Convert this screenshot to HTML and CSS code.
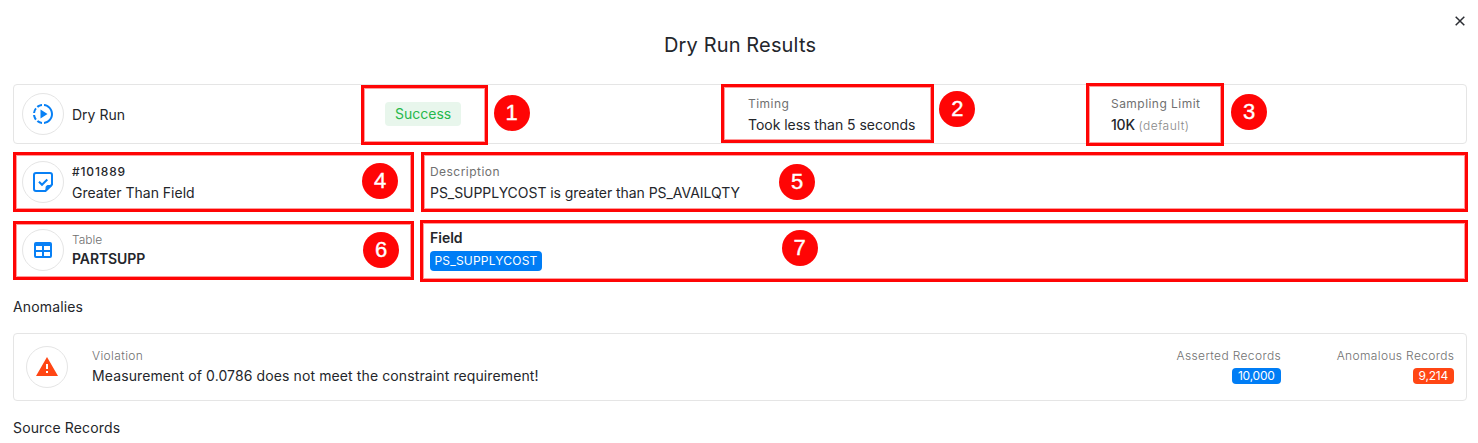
FILE: index.html
```html
<!DOCTYPE html>
<html lang="en">
<head>
<meta charset="utf-8">
<title>Dry Run Results</title>
<link rel="stylesheet" href="styles.css">
</head>
<body>
<main class="dialog">
  <header class="header">
    <h1 class="title">Dry Run Results</h1>
    <button class="close" aria-label="Close"><svg width="10" height="10" viewBox="0 0 10 10"><path d="M.7.7l8.6 8.6M9.3.7L.7 9.3" stroke="#2b2d33" stroke-width="1.5"/></svg></button>
  </header>

  <section class="card run">
    <div class="icon"><svg width="24" height="24" viewBox="0 0 24 24" fill="#0880f5"><path d="M13 2.05v2.02c3.95.49 7 3.85 7 7.93s-3.05 7.44-7 7.93v2.02c5.05-.5 9-4.76 9-9.95s-3.95-9.45-9-9.95M11 2.06c-1.95.19-3.81.95-5.33 2.2L7.1 5.74A8 8 0 0 1 11 4.06zM4.26 5.67A9.9 9.9 0 0 0 2.05 11h2a8 8 0 0 1 1.63-3.9zM2.06 13c.2 1.96.97 3.81 2.21 5.33l1.42-1.43A8 8 0 0 1 4.06 13zM7.1 18.37l-1.43 1.37A10 10 0 0 0 11 22v-2a8 8 0 0 1-3.9-1.63M9.5 7.5v9l7-4.5z"/></svg></div>
    <span class="text t-run">Dry Run</span>
    <div class="cell-status"><span class="status">Success</span></div>
    <div class="stack cell-timing"><span class="label">Timing</span><span class="text t-took">Took less than 5 seconds</span></div>
    <div class="stack cell-limit"><span class="label">Sampling Limit</span><span class="text t-ten">10K <span class="muted">(default)</span></span></div>
  </section>

  <section class="row">
    <div class="icon"><svg width="24" height="24" viewBox="0 0 24 24" fill="none" stroke="#0880f5" stroke-width="2"><path d="M14.500 21H5a2 2 0 0 1-2-2V5a2 2 0 0 1 2-2h14a2 2 0 0 1 2 2v9.500z"/><path d="M15 21v-3.500a2 2 0 0 1 2-2h4z" fill="#0880f5" stroke-width="1"/><path d="M8 11.800l3 3 5.300-5.300"/></svg></div>
    <div class="stack ident"><span class="label id">#101889</span><span class="text t-rule">Greater Than Field</span></div>
    <div class="stack"><span class="label t-desc">Description</span><span class="text t-cond">PS_SUPPLYCOST is greater than PS_AVAILQTY</span></div>
  </section>

  <section class="row">
    <div class="icon"><svg width="24" height="24" viewBox="0 0 24 24" fill="#0880f5"><path d="M5 4h14a2 2 0 0 1 2 2v12a2 2 0 0 1-2 2H5a2 2 0 0 1-2-2V6a2 2 0 0 1 2-2m0 4v4h6V8zm8 0v4h6V8zm-8 6v4h6v-4zm8 0v4h6v-4z"/></svg></div>
    <div class="stack ident tight"><span class="label light t-table">Table</span><span class="text strong t-part">PARTSUPP</span></div>
    <div class="field"><span class="text strong">Field</span><span class="chip">PS_SUPPLYCOST</span></div>
  </section>

  <h2 class="heading t-anom">Anomalies</h2>
  <section class="card anomaly">
    <div class="icon"><svg width="24" height="24" viewBox="0 0 24 24" fill="#ff4614"><path d="M13 14h-2V9h2m0 9h-2v-2h2M1 21h22L12 2z"/></svg></div>
    <div class="stack violation"><span class="label light">Violation</span><span class="text t-meas">Measurement of 0.0786 does not meet the constraint requirement!</span></div>
    <div class="metric"><span class="label light">Asserted Records</span><span class="count">10,000</span></div>
    <div class="metric"><span class="label light">Anomalous Records</span><span class="count alert">9,214</span></div>
  </section>
  <h2 class="heading t-src">Source Records</h2>

  <div class="callouts">
    <i class="box b1"></i><i class="box b2"></i><i class="box b3"></i><i class="box b4"></i><i class="box b5"></i><i class="box b6"></i><i class="box b7"></i>
    <b class="dot d1">1</b><b class="dot d2">2</b><b class="dot d3">3</b><b class="dot d4">4</b><b class="dot d5">5</b><b class="dot d6">6</b><b class="dot d7">7</b>
  </div>
</main>
</body>
</html>
```
FILE: styles.css
```css
* { box-sizing: border-box; }
body { margin: 0; background: #fff; color: #24262b; font: 400 14px/20px Inter, "Liberation Sans", sans-serif; white-space: nowrap; overflow: hidden; }
.dialog { position: relative; height: 443px; padding: 0 11px 0 13px; overflow: hidden; }
.header { height: 84px; }
.title { margin: 0; padding-top: 31px; font-size: 20px; line-height: 28px; font-weight: 400; letter-spacing: .15px; text-align: center; }
.close { position: absolute; top: 16px; right: 13px; width: 10px; height: 10px; padding: 0; border: 0; background: none; }
.close svg, .icon svg { display: block; }
.card { display: flex; align-items: center; border: 1px solid #e5e5e5; border-radius: 4px; }
.run { height: 60px; padding-left: 8px; margin-bottom: 8px; }
.row { display: flex; align-items: center; height: 60px; padding-left: 9px; margin-bottom: 8px; }
.icon { display: flex; align-items: center; justify-content: center; flex: none; width: 42px; height: 42px; margin-right: 8px; border: 1px solid #e5e5e5; border-radius: 50%; }
.stack { display: flex; flex-direction: column; margin-top: 1px; }
.label { font-size: 12px; line-height: 18px; color: #707070; padding-bottom: 2px; letter-spacing: .46px; }
.light { font-weight: 300; letter-spacing: .36px; }
.id { color: #24262b; font-weight: 500; letter-spacing: .85px; }
.strong { font-weight: 600; }
.muted { font-size: 12px; line-height: 1; font-weight: 300; color: #888; letter-spacing: .5px; }
.t-run { width: 313px; padding-top: 2px; }
.t-took { letter-spacing: -.03px; }
.t-ten { font-weight: 500; letter-spacing: -.2px; }
.t-cond { letter-spacing: -.05px; }
.t-meas { letter-spacing: .11px; }
.t-table { letter-spacing: 0; }
.t-part { letter-spacing: -.1px; }
.cell-status { width: 363px; }
.status { display: inline-block; height: 24px; padding: 0 10px; border-radius: 4px; background: #e8f6ec; color: #26b84b; line-height: 24px; }
.cell-timing { width: 363px; }
.ident { width: 358px; }
.tight { margin: 0 0 1px; }
.tight .label { padding-bottom: 0; }
.field { display: flex; flex-direction: column; align-items: flex-start; gap: 4px; margin-bottom: 2px; }
.field .text { line-height: 19px; }
.chip { width: 112px; height: 20px; border-radius: 4px; background: #007df5; color: #fff; font-size: 12px; line-height: 20px; text-align: center; letter-spacing: .22px; }
.heading { margin: 0; font-size: 14px; line-height: 20px; font-weight: 400; letter-spacing: .15px; }
.t-anom { margin-top: 17px; }
.anomaly { height: 68px; margin: 16px 0 17px; padding: 0 12px; }
.anomaly .icon { margin-right: 24px; }
.violation { flex: 1; margin: 0 0 2px; }
.violation .label { padding-bottom: 1px; }
.metric { display: flex; flex-direction: column; align-items: flex-end; margin: 0 0 4px 56px; }
.metric .label { padding-bottom: 3px; margin-right: -.4px; }
.count { height: 16px; padding: 0 6px; border-radius: 4px; background: #007df5; color: #fff; font-size: 12px; line-height: 16px; letter-spacing: -.22px; }
.alert { background: #ff4614; }
.callouts { position: absolute; inset: 0; }
.box { position: absolute; border: 3px solid #ff0505; box-shadow: inset 0 0 0 1px #ff9c9c; }
.b1 { left: 361px; top: 85px; width: 127px; height: 60px; }
.b2 { left: 721px; top: 84px; width: 213px; height: 59px; }
.b3 { left: 1086px; top: 83px; width: 138px; height: 63px; }
.b4 { left: 13px; top: 152px; width: 401px; height: 60px; }
.b5 { left: 421px; top: 152px; width: 1047px; height: 60px; }
.b6 { left: 13px; top: 221px; width: 401px; height: 59px; }
.b7 { left: 420px; top: 220px; width: 1048px; height: 62px; }
.dot { position: absolute; width: 36px; height: 36px; border-radius: 50%; background: #ff0505; color: #fff; font: 400 22px/35px "Liberation Sans", sans-serif; text-align: center; -webkit-text-stroke: .4px #fff; }
.d1 { left: 493.500px; top: 95px; }
.d2 { left: 939.300px; top: 91.300px; }
.d3 { left: 1231px; top: 94px; }
.d4 { left: 362px; top: 163px; }
.d5 { left: 779px; top: 164px; }
.d6 { left: 363px; top: 232px; }
.d7 { left: 781.700px; top: 230.300px; }
```
